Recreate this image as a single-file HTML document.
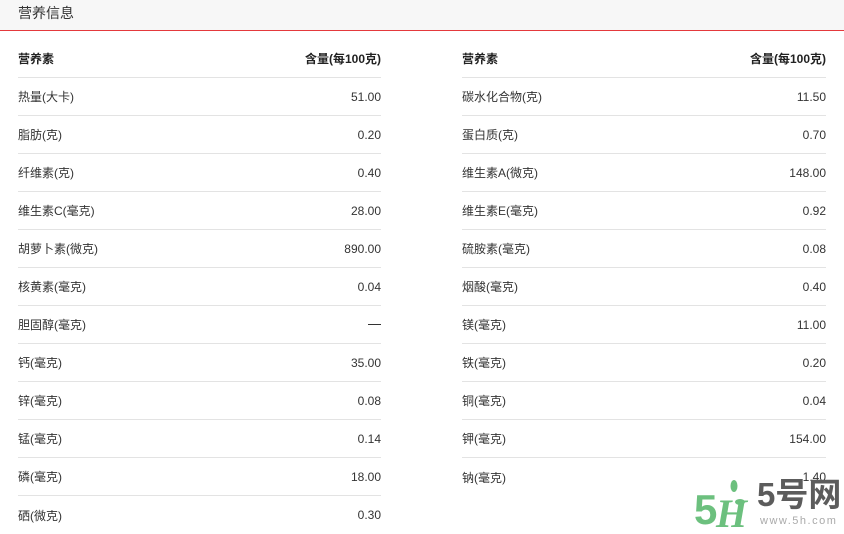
<!DOCTYPE html>
<html><head><meta charset="utf-8"><style>
body{margin:0;width:844px;height:528px;overflow:hidden;background:#fff;font-family:"Liberation Sans","Noto Sans CJK SC",sans-serif;color:#333;font-size:12px;position:relative}
.hd{height:31px;background:#f7f7f7;border-bottom:1px solid #e4393c;box-sizing:border-box;padding-left:18px;line-height:26px;font-size:14px;color:#333}
.t{position:absolute;top:40px;width:363px}
.r{height:38px;border-bottom:1px solid #e3e3e3;display:flex;justify-content:space-between;align-items:center;box-sizing:border-box}
.r:first-child{height:38px;font-weight:bold;color:#222}
.r:last-child{border-bottom:none}
.wm{position:absolute;left:694px;top:478px}
</style></head><body>
<div class="hd">营养信息</div>
<div class="t" style="left:18px">
<div class="r"><span>营养素</span><span>含量(每100克)</span></div>
<div class="r"><span>热量(大卡)</span><span>51.00</span></div>
<div class="r"><span>脂肪(克)</span><span>0.20</span></div>
<div class="r"><span>纤维素(克)</span><span>0.40</span></div>
<div class="r"><span>维生素C(毫克)</span><span>28.00</span></div>
<div class="r"><span>胡萝卜素(微克)</span><span>890.00</span></div>
<div class="r"><span>核黄素(毫克)</span><span>0.04</span></div>
<div class="r"><span>胆固醇(毫克)</span><span style="display:inline-block;width:13px;height:1px;background:#333"></span></div>
<div class="r"><span>钙(毫克)</span><span>35.00</span></div>
<div class="r"><span>锌(毫克)</span><span>0.08</span></div>
<div class="r"><span>锰(毫克)</span><span>0.14</span></div>
<div class="r"><span>磷(毫克)</span><span>18.00</span></div>
<div class="r"><span>硒(微克)</span><span>0.30</span></div>
</div>
<div class="t" style="left:462px;width:364px">
<div class="r"><span>营养素</span><span>含量(每100克)</span></div>
<div class="r"><span>碳水化合物(克)</span><span>11.50</span></div>
<div class="r"><span>蛋白质(克)</span><span>0.70</span></div>
<div class="r"><span>维生素A(微克)</span><span>148.00</span></div>
<div class="r"><span>维生素E(毫克)</span><span>0.92</span></div>
<div class="r"><span>硫胺素(毫克)</span><span>0.08</span></div>
<div class="r"><span>烟酸(毫克)</span><span>0.40</span></div>
<div class="r"><span>镁(毫克)</span><span>11.00</span></div>
<div class="r"><span>铁(毫克)</span><span>0.20</span></div>
<div class="r"><span>铜(毫克)</span><span>0.04</span></div>
<div class="r"><span>钾(毫克)</span><span>154.00</span></div>
<div class="r" style="border-bottom:none"><span>钠(毫克)</span><span>1.40</span></div>
</div>
<div class="wm">
<svg width="64" height="50" style="position:absolute;left:0;top:0"><text x="0" y="46" font-size="42" font-weight="bold" fill="#6cc07e" font-family="Liberation Sans">5</text><text x="22" y="49" font-size="40" font-weight="bold" fill="#6cc07e" font-family="Liberation Serif" font-style="italic">H</text><ellipse cx="40" cy="8" rx="3.5" ry="6" fill="#6cc07e"/><ellipse cx="46" cy="24" rx="5" ry="3" fill="#6cc07e"/></svg>
<div style="position:absolute;left:63px;top:-2px;font-size:33px;font-weight:bold;color:#5c5c5c;white-space:nowrap;line-height:38px">5号网</div>
<div style="position:absolute;left:66px;top:37px;font-size:11px;color:#aaa;letter-spacing:1.5px;white-space:nowrap">www.5h.com</div>
</div>
</body></html>
